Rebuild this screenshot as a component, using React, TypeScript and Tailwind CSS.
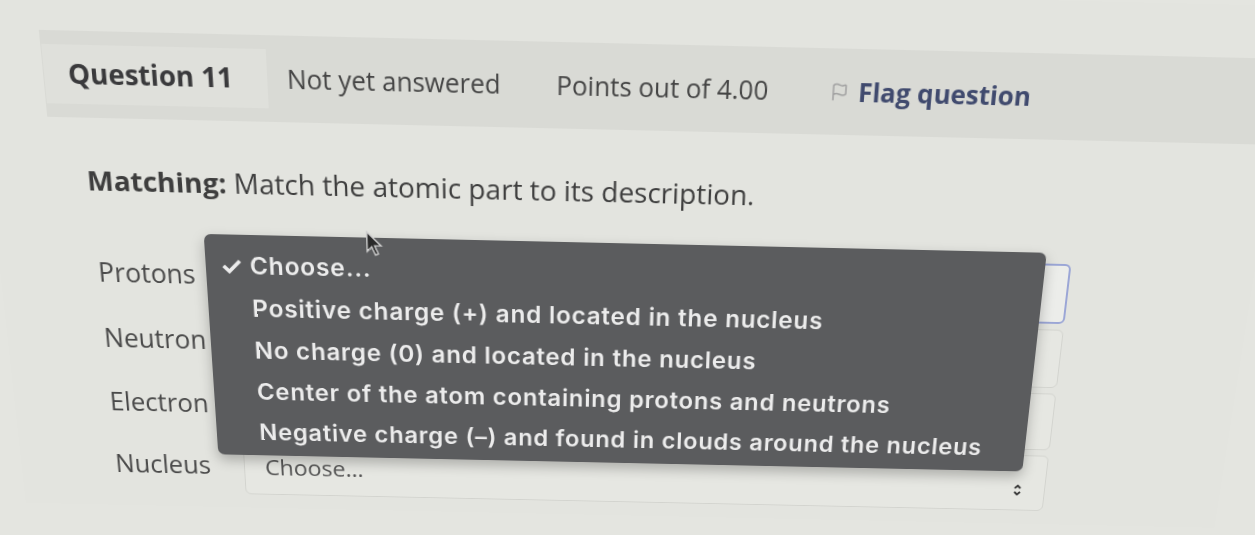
import React from 'react';
import { Flag } from 'lucide-react';

const options = [
  'Choose...',
  'Positive charge (+) and located in the nucleus',
  'No charge (0) and located in the nucleus',
  'Center of the atom containing protons and neutrons',
  'Negative charge (–) and found in clouds around the nucleus',
];

const parts = ['Protons', 'Neutron', 'Electron', 'Nucleus'];

function Cursor() {
  return (
    <svg width="20" height="28" viewBox="0 0 16 24" className="absolute left-[160px] top-[-7px]">
      <path d="M1 1 L1 18 L5 14 L8 21 L10.5 20 L7.5 13 L13 13 Z" fill="#2a2a2a" stroke="#d0d0d0" strokeWidth="1.2" />
    </svg>
  );
}

function Dropdown() {
  return (
    <div className="absolute left-[108px] top-[-8px] w-[839px] rounded-[7px] bg-[#5b5c5e] pt-[9px] pb-[4px] shadow-[0_6px_14px_rgba(0,0,0,0.25)] font-['Inter',sans-serif] text-[24.5px] font-semibold tracking-[0.8px] text-[#ececec]">
      <Cursor />
      {options.map((opt, i) => (
        <div key={opt} className="flex h-[44px] items-center pl-[14px]">
          <span className="w-[30px] text-[26px] font-bold">{i === 0 ? '✓' : ''}</span>
          <span className="whitespace-nowrap">{opt}</span>
        </div>
      ))}
    </div>
  );
}

export default function App() {
  return (
    <div className="h-[535px] w-[1255px] overflow-hidden bg-[#e4e5e0]">
      <div className="h-full w-full bg-[#e3e4df] pt-[49px] font-['Open_Sans',sans-serif] text-[#3c3c3c] [transform:perspective(1000px)_rotateX(-12deg)_rotate(1.3deg)]">
        <header className="ml-[62px] flex h-[82px] items-center bg-[#d9dad5]">
          <div className="ml-[1px] flex h-[56px] w-[214px] items-center bg-[#dfe0db] pl-[23px]">
            <span className="whitespace-nowrap text-[26.5px] font-bold text-[#3a3a3c]">Question 11</span>
          </div>
          <span className="ml-[19px] w-[259px] whitespace-nowrap text-[25px] text-[#454545]">Not yet answered</span>
          <span className="w-[264px] whitespace-nowrap text-[25px] text-[#454545]">Points out of 4.00</span>
          <Flag className="h-[18px] w-[18px] text-[#a2a2a2]" strokeWidth={2} />
          <span className="ml-[9px] whitespace-nowrap text-[25px] font-bold text-[#404a6e]">Flag question</span>
        </header>

        <p className="ml-[95px] mt-[43px] whitespace-nowrap text-[27.5px] leading-[36px] text-[#3e3e3e]">
          <span className="font-bold">Matching:</span> Match the atomic part to its description.
        </p>

        <div className="relative ml-[98px] mt-[41px]">
          {parts.map((p, i) => (
            <div key={p} className="flex h-[68px] items-center">
              <span className="w-[134px] whitespace-nowrap text-[26.5px] text-[#4a4a4a]">{p}</span>
              <div
                className={
                  i === 0
                    ? 'flex h-[62px] w-[839px] items-center rounded-[6px] border-2 border-[#9ba6d6] bg-[#ecedea] pl-[21px] text-[24px] text-[#555]'
                    : 'flex h-[62px] w-[839px] items-center rounded-[6px] border border-[#d3d4cf] bg-[#e6e7e2] pl-[21px] text-[24px] text-[#555]'
                }
              >
                Choose...
              </div>
            </div>
          ))}
          <Dropdown />
          <svg width="8" height="12" viewBox="0 0 8 12" className="absolute left-[940px] top-[240px]">
            <path d="M1 4 L4 1 L7 4 M1 8 L4 11 L7 8" stroke="#333" strokeWidth="2" fill="none" />
          </svg>
        </div>
      </div>
    </div>
  );
}
